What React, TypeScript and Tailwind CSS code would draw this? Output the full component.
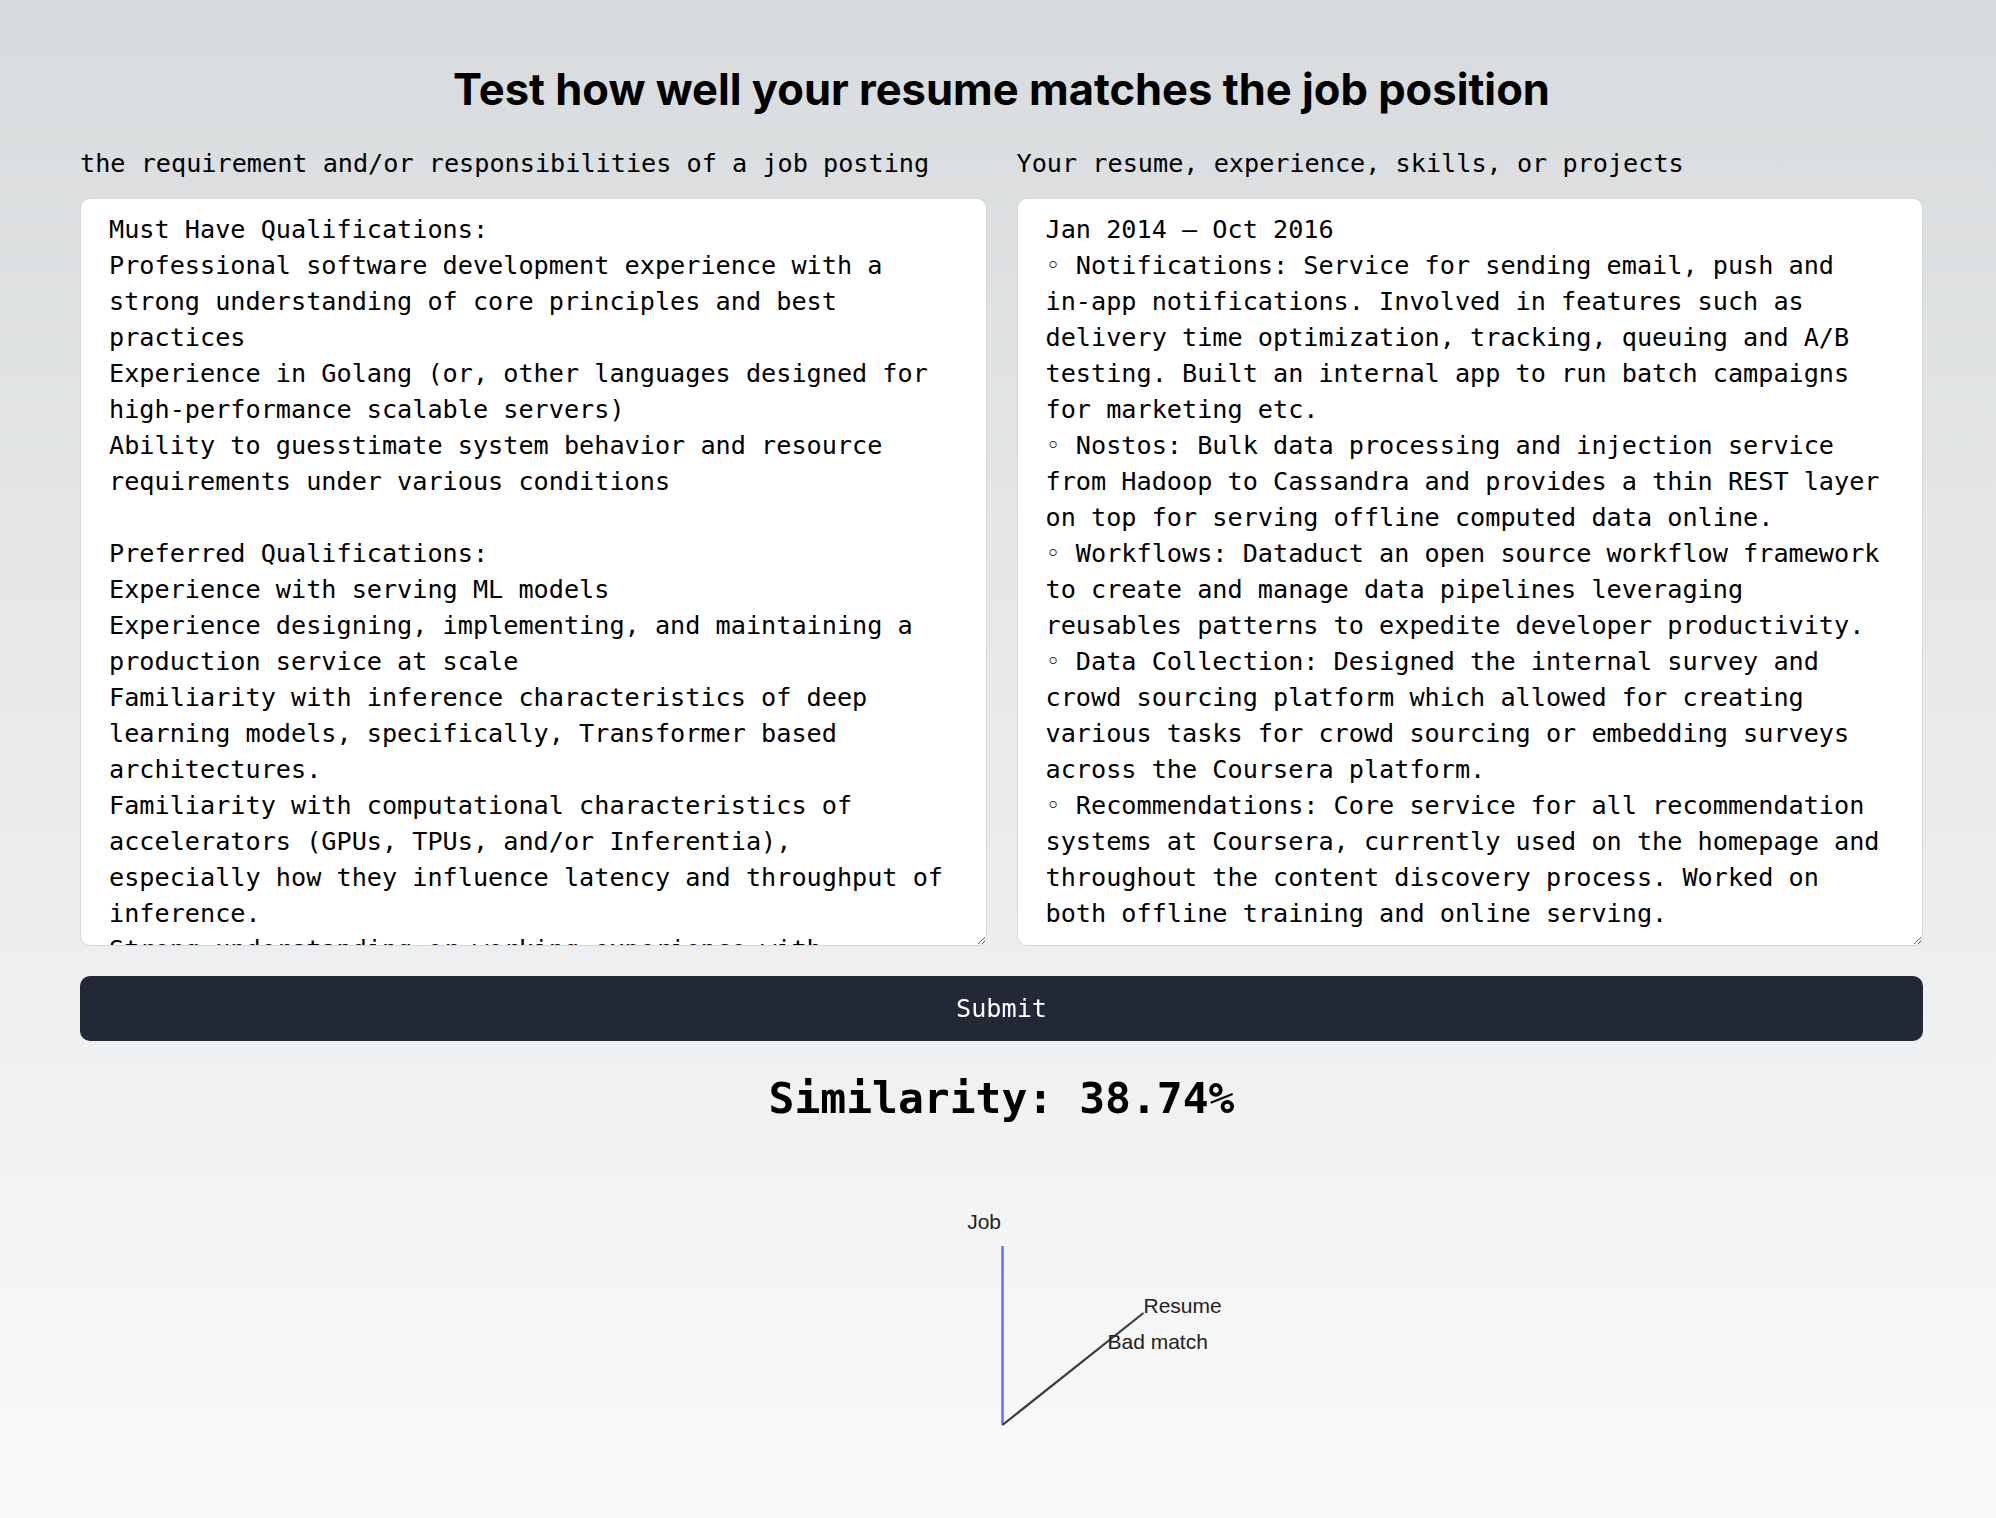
const jobText = `Must Have Qualifications:
Professional software development experience with a strong understanding of core principles and best practices
Experience in Golang (or, other languages designed for high-performance scalable servers)
Ability to guesstimate system behavior and resource requirements under various conditions

Preferred Qualifications:
Experience with serving ML models
Experience designing, implementing, and maintaining a production service at scale
Familiarity with inference characteristics of deep learning models, specifically, Transformer based architectures.
Familiarity with computational characteristics of accelerators (GPUs, TPUs, and/or Inferentia), especially how they influence latency and throughput of inference.
Strong understanding or working experience with distributed systems, concurrency and networking`;

const resumeText = `Jan 2014 – Oct 2016
◦ Notifications: Service for sending email, push and in-app notifications. Involved in features such as delivery time optimization, tracking, queuing and A/B testing. Built an internal app to run batch campaigns for marketing etc.
◦ Nostos: Bulk data processing and injection service from Hadoop to Cassandra and provides a thin REST layer on top for serving offline computed data online.
◦ Workflows: Dataduct an open source workflow framework to create and manage data pipelines leveraging reusables patterns to expedite developer productivity.
◦ Data Collection: Designed the internal survey and crowd sourcing platform which allowed for creating various tasks for crowd sourcing or embedding surveys across the Coursera platform.
◦ Recommendations: Core service for all recommendation systems at Coursera, currently used on the homepage and throughout the content discovery process. Worked on both offline training and online serving.`;

const Field = ({ label, value }: { label: string; value: string }) => {
  return (
    <div className="flex flex-col">
      <label className="text-[25.2px] leading-[36px] text-black whitespace-nowrap">{label}</label>
      <textarea
        defaultValue={value}
        className="mt-[16px] h-[748px] w-full rounded-[10px] border border-[#d4d7db] bg-white px-[28px] pt-[13px] pb-[11px] text-[25.2px] leading-[36px] text-black font-['DejaVu_Sans_Mono',monospace] outline-none [scrollbar-width:none]"
      />
    </div>
  );
};

const VectorChart = () => {
  return (
    <svg width="600" height="260" viewBox="0 0 600 260" className="mx-auto mt-[65px] block">
      <line x1="300.5" y1="57" x2="300.5" y2="236" stroke="#6272fb" strokeWidth="2.5" />
      <line x1="300.5" y1="236" x2="441.5" y2="124" stroke="#3a3a3a" strokeWidth="2.2" />
      <g fontFamily="'Liberation Sans', Arial, sans-serif" fontSize="21" fill="#222">
        <text x="299" y="40" textAnchor="end">Job</text>
        <text x="441.5" y="123.5">Resume</text>
        <text x="405.5" y="160">Bad match</text>
      </g>
    </svg>
  );
};

export default function App() {
  return (
    <div className="min-h-[1518px] bg-linear-to-b from-[#d8dbdd] to-[#fafafa] font-['DejaVu_Sans_Mono',monospace]">
      <div className="ml-[80px] w-[1843px] pt-[64px]">
        <h1 className="text-center font-['Inter',sans-serif] text-[43.5px] leading-[50px] font-bold text-black">
          Test how well your resume matches the job position
        </h1>

        <div className="mt-[32px] grid grid-cols-2 gap-[30px]">
          <Field label="the requirement and/or responsibilities of a job posting" value={jobText} />
          <Field label="Your resume, experience, skills, or projects" value={resumeText} />
        </div>

        <button className="mt-[30px] h-[65px] w-full rounded-[10px] bg-[#222836] text-[25.2px] text-white">
          Submit
        </button>

        <h2 className="mt-[31px] text-center text-[43px] leading-[52px] font-bold text-black">
          Similarity: 38.74%
        </h2>

        <VectorChart />
      </div>
    </div>
  );
}
